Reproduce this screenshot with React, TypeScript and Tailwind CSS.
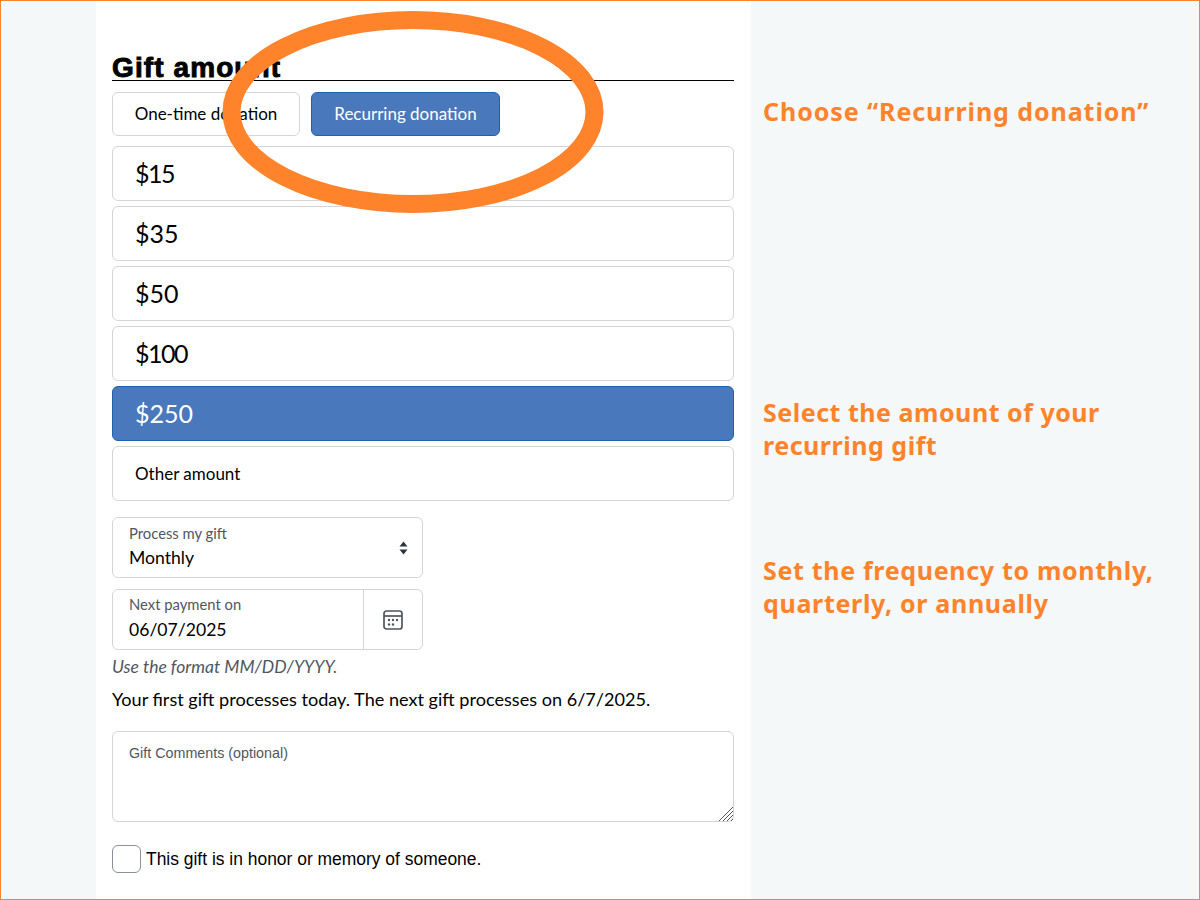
import React from "react";

const ui = "font-['Lato',sans-serif]";
const note = "font-['Noto_Sans',sans-serif] font-bold text-[#ff832b] text-[25px] leading-[33px]";

function Amount({ label, active, small, tight }: { label: string; active?: boolean; small?: boolean; tight?: boolean }) {
  return (
    <div
      className={`flex h-[55px] items-center rounded-[6px] border pl-[22px] pt-px ${small ? "text-[17px]" : "text-[25px]"} ${
        tight ? "tracking-[-1.5px]" : ""
      } ${active ? "border-[#1c62b0] bg-[#4a78bc] text-white" : "border-[#d3d5d8] bg-white text-black"}`}
    >
      {label}
    </div>
  );
}

function Field({ label, value, top, valueLine }: { label: string; value: string; top: string; valueLine: string }) {
  return (
    <div className={`flex flex-col pl-[16px] ${top}`}>
      <span className="text-[14.8px] leading-[20px] text-[#50565e]">{label}</span>
      <span className={`text-[17.6px] text-black ${valueLine}`}>{value}</span>
    </div>
  );
}

export default function App() {
  return (
    <div className={`relative flex h-[900px] w-[1200px] overflow-hidden border border-[#ff832b] bg-[#f4f8f9] ${ui}`}>
      <main className="ml-[95px] flex w-[655px] shrink-0 flex-col bg-white pl-[16px] pr-[17px] pt-[50px]">
        <h2 className="h-[30px] border-b border-black font-['Liberation_Sans',sans-serif] text-[28px] font-bold leading-[33px] tracking-[1.1px] text-black [-webkit-text-stroke:0.9px_black]">
          Gift amount
        </h2>
        <div className="mt-[11px] flex gap-[11px] text-[17px]">
          <div className="flex h-[44px] w-[188px] items-center justify-center rounded-[6px] border border-[#d3d5d8] text-black">
            One-time donation
          </div>
          <div className="flex h-[44px] w-[189px] items-center justify-center rounded-[6px] border border-[#1c62b0] bg-[#4a78bc] text-white">
            Recurring donation
          </div>
        </div>
        <div className="mt-[10px] flex flex-col gap-[5px]">
          <Amount label="$15" tight />
          <Amount label="$35" />
          <Amount label="$50" />
          <Amount label="$100" tight />
          <Amount label="$250" active />
          <Amount label="Other amount" small />
        </div>
        <div className="mt-[16px] flex h-[61px] w-[311px] items-start justify-between rounded-[6px] border border-[#d3d5d8] pr-[14px]">
          <Field label="Process my gift" value="Monthly" top="mt-[5px]" valueLine="leading-[30px]" />
          <svg width="9" height="14" viewBox="0 0 9 14" className="mt-[23px]" fill="#2f343a">
            <path d="M4.5 0.5 8.5 5.5H0.5Z" />
            <path d="M4.5 13.5 0.5 8.5H8.5Z" />
          </svg>
        </div>
        <div className="mt-[11px] flex h-[61px] w-[311px] rounded-[6px] border border-[#d3d5d8]">
          <div className="flex-1">
            <Field label="Next payment on" value="06/07/2025" top="mt-[4px]" valueLine="leading-[32px]" />
          </div>
          <div className="flex w-[59px] items-center justify-center border-l border-[#d3d5d8]">
            <svg width="20" height="20" viewBox="0 0 20 20" fill="none" stroke="#50565e" strokeWidth="1.7">
              <rect x="1" y="1" width="18" height="18" rx="2.5" />
              <path d="M1 6h18" />
              <g fill="#50565e" stroke="none">
                <circle cx="6" cy="10" r="1.2" />
                <circle cx="10" cy="10" r="1.2" />
                <circle cx="14" cy="10" r="1.2" />
                <circle cx="6" cy="14.5" r="1.2" />
                <circle cx="10" cy="14.5" r="1.2" />
              </g>
            </svg>
          </div>
        </div>
        <p className="mt-[6px] text-[17.5px] italic leading-[22px] text-[#50565e]">Use the format MM/DD/YYYY.</p>
        <p className="mt-[10px] text-[18.1px] leading-[22px] text-black">
          Your first gift processes today. The next gift processes on 6/7/2025.
        </p>
        <div className="relative mt-[21px] h-[91px]">
          <textarea
            readOnly
            aria-label="Gift Comments (optional)"
            className="block h-[91px] w-full resize-none rounded-[6px] border border-[#d3d5d8] bg-white outline-none"
          />
          <span className="absolute left-[17px] top-[13px] font-['Liberation_Sans',sans-serif] text-[14.3px] leading-[18px] text-[#50565e]">
            Gift Comments (optional)
          </span>
          <svg className="absolute bottom-0 right-0" width="16" height="16" viewBox="0 0 16 16" stroke="#555" strokeWidth="1" fill="none">
            <path d="M1 15 15 1M5 15 15 5M9 15 15 9M13 15 15 13" />
          </svg>
        </div>
        <div className="mt-[23px] flex items-center gap-[5px] font-['Liberation_Sans',sans-serif] text-[17.45px] text-black">
          <div className="h-[28px] w-[29px] rounded-[6px] border border-[#8a8f98] bg-white" />
          This gift is in honor or memory of someone.
        </div>
      </main>

      <aside className="flex flex-col pl-[12px]">
        <p className={`${note} mt-[94px] tracking-[0.93px]`}>Choose “Recurring donation”</p>
        <p className={`${note} mt-[268px] tracking-[0.52px]`}>
          Select the amount of your
          <br />
          recurring gift
        </p>
        <p className={`${note} mt-[92px] tracking-[0.68px]`}>
          Set the frequency to monthly,
          <br />
          quarterly, or annually
        </p>
      </aside>

      <svg className="pointer-events-none absolute left-[220px] top-[8px]" width="384" height="206" viewBox="0 0 384 206" fill="none">
        <ellipse cx="192" cy="103" rx="181.5" ry="92" stroke="#ff832b" strokeWidth="18" />
      </svg>
    </div>
  );
}
